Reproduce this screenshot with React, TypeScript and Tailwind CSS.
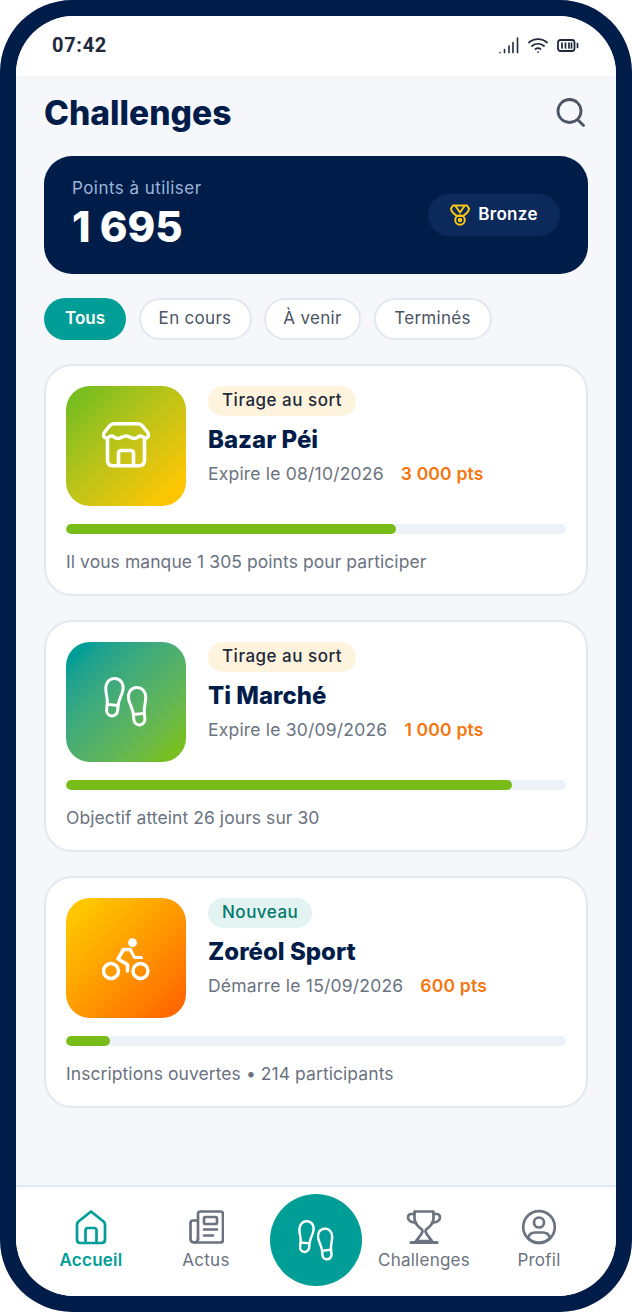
import type { ReactNode } from "react"

const font = "font-['Inter','Liberation_Sans',sans-serif]"

function Foot({ x, y, rotate, w = 3 }: { x: number; y: number; rotate: number; w?: number }) {
  return (
    <g transform={`translate(${x} ${y}) rotate(${rotate} 10 20)`} fill="none" stroke="white" strokeWidth={w} strokeLinejoin="round">
      <path d="M10 1.5C16 1.5 19 6.5 18.6 12C18.2 18 15.5 21 15.5 28H4.5C4.5 21 1.8 18 1.4 12C1 6.5 4 1.5 10 1.5Z" />
      <path d="M4.5 28V33.5A5.5 5.5 0 0 0 15.5 33.5V28" />
    </g>
  )
}

function Steps({ className }: { className: string }) {
  return (
    <svg viewBox="0 0 46 50" className={className}>
      <Foot x={0.5} y={0} rotate={6} />
      <Foot x={25} y={9} rotate={-6} />
    </svg>
  )
}

function Store() {
  return (
    <svg viewBox="0 0 48 48" className="w-12 h-12" fill="none" stroke="white" strokeWidth="3.6" strokeLinejoin="round" strokeLinecap="round">
      <path d="M12 1.8H36C38 1.8 39.5 2.8 41 4.5L46 11C47.2 13.5 46 16 43.5 16C41 16 40.5 14 38.5 14C36 14 35.5 16.5 32 16.5C28.5 16.5 28 14 24 14C20 14 19.5 16.5 16 16.5C12.5 16.5 12 14 9.5 14C7.5 14 7 16 4.5 16C2 16 0.8 13.5 2 11L7 4.5C8.5 2.8 10 1.8 12 1.8Z" />
      <path d="M5.5 18V38C5.5 41.8 7.5 43.8 11 43.8H37C40.5 43.8 42.5 41.8 42.5 38V18" />
      <path d="M16.5 43.5V31.5C16.5 29.5 17.5 28.5 19.5 28.5H28.5C30.5 28.5 31.5 29.5 31.5 31.5V43.5" />
    </svg>
  )
}

function Bike() {
  return (
    <svg viewBox="0 0 48 48" className="w-12 h-12" fill="none" stroke="white" strokeLinecap="round" strokeLinejoin="round">
      <circle cx="9" cy="37" r="7.5" strokeWidth="3.4" />
      <circle cx="38.5" cy="37" r="7.5" strokeWidth="3.4" />
      <circle cx="30.5" cy="8.7" r="4.4" fill="white" stroke="none" />
      <path d="M28.5 15.5L21.5 15.5L16 25L25.5 30.5V37" strokeWidth="3.6" />
      <path d="M28.5 16L32.5 23.5H39.5" strokeWidth="3" />
    </svg>
  )
}

function Medal() {
  return (
    <svg viewBox="0 0 20 22" className="w-5 h-[22px]" fill="none" stroke="#fac515" strokeWidth="2" strokeLinejoin="round" strokeLinecap="round">
      <path d="M3 1.5H17L19 4.5C19 7 16 10 13 12H7C4 10 1 7 1 4.5Z" />
      <path d="M5.5 2L10 8.5L14.5 2" />
      <circle cx="10" cy="16" r="4.8" />
      <circle cx="10" cy="16" r="1.2" />
    </svg>
  )
}

function Search() {
  return (
    <svg viewBox="0 0 32 32" className="w-8 h-8" fill="none" stroke="#4b5563" strokeWidth="2.8" strokeLinecap="round">
      <circle cx="14.5" cy="14" r="11.5" />
      <path d="M23.5 23.5L28.5 28.5" />
    </svg>
  )
}

function NavIcon({ children }: { children: ReactNode }) {
  return (
    <svg viewBox="0 0 36 36" className="w-9 h-9" fill="none" stroke="currentColor" strokeWidth="2.7" strokeLinejoin="round" strokeLinecap="round">
      {children}
    </svg>
  )
}

const navIcons: Record<string, ReactNode> = {
  Accueil: (
    <>
      <path d="M18 2.5L30.5 12.5C31.5 13.3 32 14.3 32 15.6V30.5C32 32.8 30.8 34 28.5 34H7.5C5.2 34 4 32.8 4 30.5V15.6C4 14.3 4.5 13.3 5.5 12.5Z" />
      <path d="M12.5 34V21.5C12.5 20 13.5 19 15 19H21C22.5 19 23.5 20 23.5 21.5V34" />
    </>
  ),
  Actus: (
    <>
      <path d="M10 30V5C10 3.5 11 2.5 12.5 2.5H32.5C34 2.5 35 3.5 35 5V31C35 32.5 34 33.5 32.5 33.5H6C4 33.5 2.5 32 2.5 30V14C2.5 12.5 3.5 11.5 5 11.5H10" />
      <path d="M10 30C10 32 8.5 33.5 6.5 33.5" />
      <rect x="16" y="8" width="13" height="7" rx="1.5" />
      <path d="M16 20.5H29M16 26.5H25" />
    </>
  ),
  Challenges: (
    <>
      <path d="M8.5 2.5H27.5V9C27.5 13 25.5 16 22.5 18.5C20.5 20 19.5 20.5 19.5 22C19.5 24.5 23 28 26 32H10C13 28 16.5 24.5 16.5 22C16.5 20.5 15.5 20 13.5 18.5C10.5 16 8.5 13 8.5 9Z" />
      <path d="M8.5 5H5.5C3 5 2 6.5 2 8.5C2 11.5 5 13.5 9.5 13.5M27.5 5H30.5C33 5 34 6.5 34 8.5C34 11.5 31 13.5 26.5 13.5" />
      <path d="M5 33.5H31" strokeWidth="3" />
    </>
  ),
  Profil: (
    <>
      <circle cx="18" cy="18" r="15.8" />
      <circle cx="18" cy="13.5" r="5" />
      <path d="M7 29C8 25.5 10.5 23.5 14 23.5H22C25.5 23.5 28 25.5 29 29C26 32.5 22 33.8 18 33.8C14 33.8 10 32.5 7 29Z" />
    </>
  ),
}

const cards = [
  {
    grad: "from-[#78be20] from-10% to-[#ffc600] to-90%",
    icon: <Store />,
    tag: "Tirage au sort",
    tagCls: "bg-[#fef3dc] text-[#1e293b]",
    title: "Bazar Péi",
    date: "Expire le 08/10/2026",
    pts: "3 000 pts",
    bar: "w-[66%]",
    note: "Il vous manque 1 305 points pour participer",
  },
  {
    grad: "from-[#009e96] from-10% to-[#78be20] to-90%",
    icon: <Steps className="w-[46px] h-[50px]" />,
    tag: "Tirage au sort",
    tagCls: "bg-[#fef3dc] text-[#1e293b]",
    title: "Ti Marché",
    date: "Expire le 30/09/2026",
    pts: "1 000 pts",
    bar: "w-[89.2%]",
    note: "Objectif atteint 26 jours sur 30",
  },
  {
    grad: "from-[#ffc600] from-10% to-[#ff6a00] to-90%",
    icon: <Bike />,
    tag: "Nouveau",
    tagCls: "bg-[#e3f3f1] text-[#00796b]",
    title: "Zoréol Sport",
    date: "Démarre le 15/09/2026",
    pts: "600 pts",
    bar: "w-[8.8%]",
    note: "Inscriptions ouvertes • 214 participants",
  },
]

const filters = [
  { label: "En cours", cls: "w-[113px]" },
  { label: "À venir", cls: "w-[97px]" },
  { label: "Terminés", cls: "w-[118px]" },
]

export default function App() {
  return (
    <div className={`w-[632px] h-[1312px] bg-white ${font}`}>
      <div className="h-full bg-[#001d4a] rounded-[72px] p-4">
        <div className="h-full bg-[#f5f7fb] rounded-[58px] overflow-hidden flex flex-col">
          {/* status bar */}
          <div className="h-[60px] shrink-0 bg-white flex items-center justify-between pl-9 pr-[37px] pb-[2px]">
            <span className="font-['Roboto',sans-serif] font-bold text-[20px] text-[#1e293b] tracking-[0.7px]">07:42</span>
            <div className="flex items-center gap-[9px] text-[#1e293b]">
              <svg viewBox="0 0 20 17" className="w-5 h-[17px]" stroke="currentColor" strokeWidth="1.6" fill="none" strokeLinecap="round">
                <path d="M1 15.5V15.6M5.5 12.5V15.6M10 9V15.6M14 5.5V15.6M18.5 1V15.6" />
              </svg>
              <svg viewBox="0 0 20 16" className="w-5 h-4" stroke="currentColor" strokeWidth="1.7" fill="none" strokeLinecap="round">
                <path d="M1 5.5C6 1 14 1 19 5.5M4 9C7.5 6 12.5 6 16 9M7.5 12C9 11 11 11 12.5 12M10 15V15.1" />
              </svg>
              <svg viewBox="0 0 22 13" className="w-[22px] h-[13px]" stroke="currentColor" fill="none">
                <rect x="1" y="1" width="16.5" height="11" rx="2.5" strokeWidth="1.8" />
                <path d="M5 4V9M8.5 4V9M12 4V9M14.5 4V9M20.5 4.5V8.5" strokeWidth="1.7" strokeLinecap="round" />
              </svg>
            </div>
          </div>

          <div className="flex-1 px-7 pt-[16px] flex flex-col">
            {/* header */}
            <div className="flex items-center justify-between h-[42px] pr-[1px]">
              <h1 className="font-extrabold text-[33.6px] leading-none text-[#001d4a] -mt-[1px]">Challenges</h1>
              <Search />
            </div>

            {/* points */}
            <div className="mt-[22px] h-[118px] bg-[#001d4a] rounded-[28px] pl-7 pr-7 flex items-center justify-between">
              <div>
                <div className="text-[17px] leading-5 text-[#9db4d8] tracking-[0.45px] -mt-[2px]">Points à utiliser</div>
                <div className="mt-[5px] text-[42px] leading-[48px] font-extrabold text-white">1 695</div>
              </div>
              <div className="h-[42px] w-[132px] rounded-full bg-[#0b2a5b] flex items-center justify-center gap-2">
                <Medal />
                <span className="text-white text-[17px] font-semibold tracking-[0.3px]">Bronze</span>
              </div>
            </div>

            {/* filters */}
            <div className="mt-6 flex gap-[12.5px] h-[42px]">
              <button className="w-[82px] rounded-full bg-[#009e96] text-white text-[17px] font-semibold">Tous</button>
              {filters.map((f) => (
                <button key={f.label} className={`${f.cls} rounded-full bg-white border-2 border-[#e2e8f0] text-[#4b5563] text-[17px] tracking-[0.3px]`}>
                  {f.label}
                </button>
              ))}
            </div>

            {/* cards */}
            <div className="mt-6 flex flex-col gap-6">
              {cards.map((c) => (
                <div key={c.title} className="h-[232px] bg-white border-2 border-[#e2e8f0] rounded-[28px] px-5 pt-5">
                  <div className="flex gap-[22px]">
                    <div className={`w-[120px] h-[120px] rounded-[24px] bg-linear-to-br ${c.grad} flex items-center justify-center`}>
                      {c.icon}
                    </div>
                    <div>
                      <span className={`inline-flex h-[30px] items-center px-[14px] pb-[1px] rounded-full text-[17px] font-medium tracking-[0.5px] ${c.tagCls}`}>
                        {c.tag}
                      </span>
                      <div className="mt-[9px] text-[24px] leading-[30px] font-extrabold text-[#001d4a]">{c.title}</div>
                      <div className="mt-[7px] flex gap-[17px] text-[17.5px] leading-6 tracking-[0.2px]">
                        <span className="text-[#6b7280]">{c.date}</span>
                        <span className="font-semibold text-[#f5760f]">{c.pts}</span>
                      </div>
                    </div>
                  </div>
                  <div className="mt-[18px] h-[10px] rounded-full bg-[#edf2f8] overflow-hidden">
                    <div className={`h-full rounded-full bg-[#78bc1a] ${c.bar}`} />
                  </div>
                  <div className="mt-[16px] text-[17.5px] leading-6 text-[#6b7280] tracking-[0.07px]">{c.note}</div>
                </div>
              ))}
            </div>
          </div>

          {/* bottom nav */}
          <div className="h-[111px] shrink-0 bg-white border-t-2 border-[#e2e8f0] flex items-start pt-[22px] text-[#6b7280]">
            <NavItem label="Accueil" cls="ml-[27px] text-[#009e96] font-semibold" />
            <NavItem label="Actus" cls="ml-[19px]" />
            <div className="ml-4 -mt-[15px] w-[92px] h-[92px] shrink-0 rounded-full bg-[#009e96] flex items-center justify-center">
              <Steps className="w-[38px] h-[41px]" />
            </div>
            <NavItem label="Challenges" cls="ml-[14px]" />
            <NavItem label="Profil" cls="ml-[19px]" />
          </div>
        </div>
      </div>
    </div>
  )
}

function NavItem({ label, cls }: { label: string; cls: string }) {
  return (
    <div className={`w-24 shrink-0 flex flex-col items-center ${cls}`}>
      <NavIcon>{navIcons[label]}</NavIcon>
      <span className="mt-[3px] text-[17px] leading-6 tracking-[0.25px]">{label}</span>
    </div>
  )
}
